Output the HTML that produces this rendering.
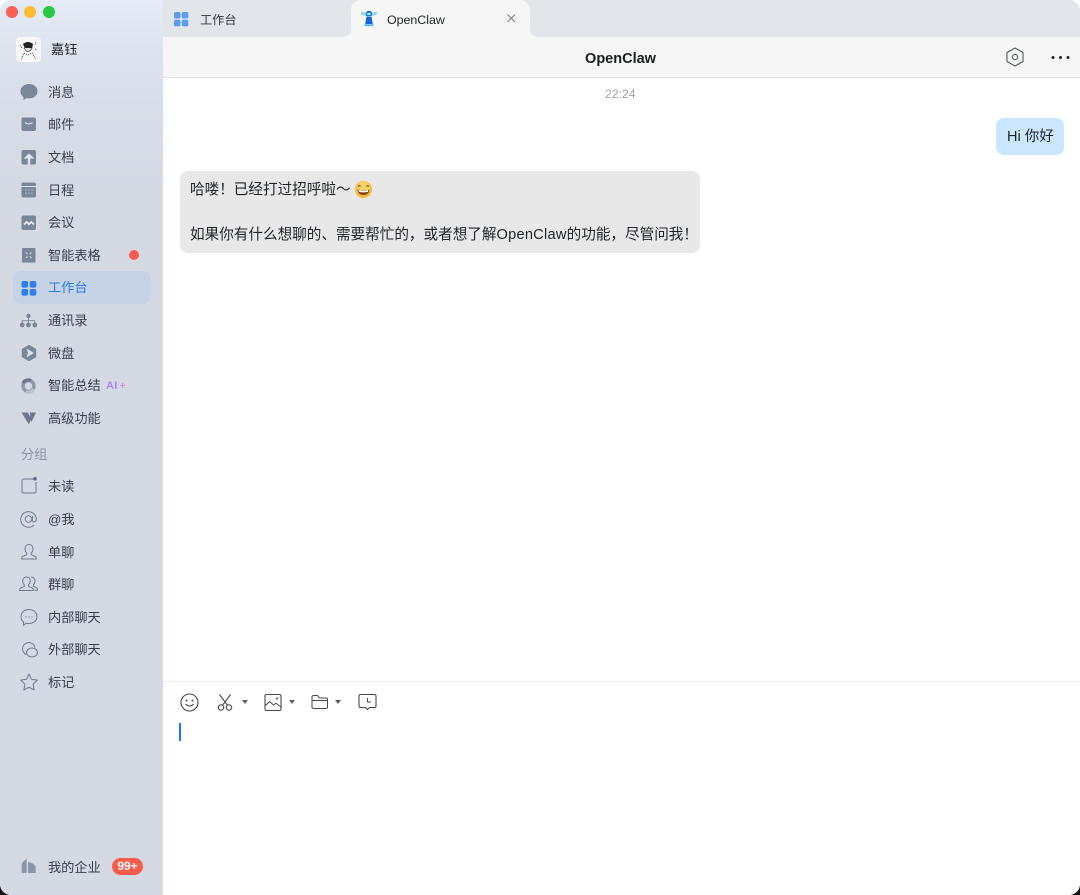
<!DOCTYPE html>
<html lang="zh">
<head>
<meta charset="utf-8">
<title>OpenClaw</title>
<style>
html,body{margin:0;padding:0;background:#fff;}
body{position:relative;width:1080px;height:895px;overflow:hidden;font-family:"Liberation Sans","Noto Sans CJK SC",sans-serif;color:#1f2329;}
#win{position:absolute;left:0;top:0;width:1080px;height:895px;overflow:hidden;border-radius:11px;background:#fff;}
#corner{position:absolute;left:0;top:860px;width:1080px;height:35px;background:#111;}
#white{position:absolute;left:0;top:0;width:1080px;height:860px;background:#f6f6f6;}
#side{position:absolute;left:0;top:0;width:163px;height:895px;background:linear-gradient(180deg,#e5ebf6 0,#d9dfea 90px,#d4d9e4 190px,#d5d9e3 100%);}
.t{position:absolute;white-space:nowrap;line-height:18px;}
.it{position:absolute;left:48px;font-size:13.2px;color:#3a404c;line-height:18px;white-space:nowrap;margin-top:.5px;}
.ic{position:absolute;left:18px;width:22px;height:22px;}
#active{position:absolute;left:13px;top:271px;width:138px;height:33px;border-radius:8px;background:#c6d3e6;}
.dot{position:absolute;width:12px;height:12px;border-radius:50%;top:6px;}
#tabs{position:absolute;left:163px;top:0;width:917px;height:37px;background:#e2e5e9;}
#tab{position:absolute;left:351px;top:0;width:179px;height:37px;background:#f6f6f6;border-radius:10px 10px 0 0;}
.fil{position:absolute;top:29px;width:8px;height:8px;background:#f6f6f6;}
.fil i{display:block;width:8px;height:8px;background:#e2e5e9;}
#head{position:absolute;left:163px;top:37px;width:917px;height:40px;background:#f6f6f6;border-bottom:1px solid #e2e2e2;box-sizing:content-box;}
#main{position:absolute;left:163px;top:78px;width:917px;height:817px;background:#fff;}
.bub{position:absolute;font-size:14.6px;line-height:22px;color:#1f2329;white-space:nowrap;}
svg{position:absolute;display:block;overflow:visible;}
</style>
</head>
<body>
<div id="corner"></div>
<div id="win">
<div id="white"></div>
<div id="side"></div>

<div class="dot" style="left:6px;background:#fe5f57"></div>
<div class="dot" style="left:24px;background:#febc2e"></div>
<div class="dot" style="left:43px;background:#28c840"></div>

<svg style="left:16px;top:37px" width="25" height="25" viewBox="0 0 25 25">
<rect width="25" height="25" rx="4" fill="#f7f7f7"/>
<path d="M7 7q5-4 10 0l-1 5-7 0z" fill="#222"/>
<path d="M8 11q4 7 8 0" fill="#ddd" stroke="#333" stroke-width=".7"/>
<path d="M5 22l3-6 4 2 4-2 4 6M4 8l2 3M20 5l-1 3M19 12l2 1" fill="none" stroke="#555" stroke-width=".8" stroke-dasharray="1.4 .8"/>
</svg>
<div class="t" style="left:51px;top:41px;font-size:13.2px;color:#1f2329">嘉钰</div>

<div id="active"></div>

<!-- 消息 -->
<svg class="ic" style="top:81px" viewBox="0 0 22 22"><path d="M11 3c4.800 0 8.500 3 8.500 7.200s-3.700 7.200-8.500 7.200c-1 0-1.800-.1-2.600-.4l-2.900 2.300v-3.500C3.700 15 2.500 12.800 2.500 10.200 2.500 6 6.200 3 11 3z" fill="#7a8799"/></svg>
<div class="it" style="top:83px">消息</div>
<!-- 邮件 -->
<svg class="ic" style="top:114px" viewBox="0 0 22 22"><rect x="3.500" y="3.500" width="14.500" height="13.500" rx="2" fill="#7a8799"/><path d="M7 8.500q3.700 2.800 7.500 0" fill="none" stroke="#dfe3eb" stroke-width="1.100"/></svg>
<div class="it" style="top:115.500px">邮件</div>
<!-- 文档 -->
<svg class="ic" style="top:146px" viewBox="0 0 22 22"><rect x="3.500" y="4" width="14.500" height="14.500" rx="2" fill="#7a8799"/><path d="M5.500 12.500l5.500-5 5.500 5z" fill="#dfe3eb"/><path d="M9.800 11h2.400v7.500H9.800z" fill="#dfe3eb"/></svg>
<div class="it" style="top:148px">文档</div>
<!-- 日程 -->
<svg class="ic" style="top:179px" viewBox="0 0 22 22"><rect x="3.500" y="3.500" width="14.500" height="15" rx="2" fill="#7a8799"/><path d="M3.500 7.500h14.500" stroke="#dfe3eb" stroke-width="1"/><path d="M7.500 11h1M10.500 11h1M13.500 11h1M7.500 14h1M10.500 14h1M13.500 14h1" stroke="#dfe3eb" stroke-width="1"/></svg>
<div class="it" style="top:181px">日程</div>
<!-- 会议 -->
<svg class="ic" style="top:212px" viewBox="0 0 22 22"><rect x="3.500" y="3.500" width="14.500" height="14.500" rx="2" fill="#7a8799"/><path d="M6 12.500l2.700-2.500 2.300 2.200 2.300-2.200 2.700 2.500" fill="none" stroke="#e6e9ef" stroke-width="1.800"/></svg>
<div class="it" style="top:213.500px">会议</div>
<!-- 智能表格 -->
<svg class="ic" style="top:244px" viewBox="0 0 22 22"><rect x="4" y="4" width="13.500" height="14.500" rx="1" fill="#7a8799"/><path d="M8 8.500l1.500 1.500M13.500 8.500l-1.500 1.500M8 14l1.500-1.500M13.500 14l-1.500-1.500" stroke="#dfe3eb" stroke-width="1"/></svg>
<div class="it" style="top:246px">智能表格</div>
<div style="position:absolute;left:129px;top:250px;width:10px;height:10px;border-radius:50%;background:#fb5b4c"></div>
<!-- 工作台 -->
<svg class="ic" style="top:278px" viewBox="0 0 22 22"><g fill="#2a7ef0"><rect x="3.500" y="3" width="6.600" height="6.600" rx="2"/><rect x="11.700" y="3" width="6.600" height="6.600" rx="2"/><rect x="3.500" y="11" width="6.600" height="6.600" rx="2"/><rect x="11.700" y="11" width="6.600" height="6.600" rx="2"/></g></svg>
<div class="it" style="top:278.500px;color:#2a7ef0">工作台</div>
<!-- 通讯录 -->
<svg class="ic" style="top:310px" viewBox="0 0 22 22"><g fill="#7a8799"><circle cx="10.500" cy="6" r="2.200"/><circle cx="4.200" cy="15" r="2.400"/><circle cx="10.500" cy="15" r="2.400"/><circle cx="16.800" cy="15" r="2.400"/></g><path d="M10.500 7v6M4.200 13v-2.300h12.600v2.300" fill="none" stroke="#7a8799" stroke-width=".9"/></svg>
<div class="it" style="top:311.500px">通讯录</div>
<!-- 微盘 -->
<svg class="ic" style="top:342px" viewBox="0 0 22 22"><path d="M11 2.800l7.200 4.100v8.200L11 19.200l-7.200-4.100V6.900z" fill="#7a8799"/><path d="M8.500 6.500l7.500 4.500-7.500 4.500 1.500-4.500z" fill="#dde1ea"/></svg>
<div class="it" style="top:344px">微盘</div>
<!-- 智能总结 -->
<svg class="ic" style="top:375px" viewBox="0 0 22 22"><circle cx="10.500" cy="11" r="5.500" fill="none" stroke="#8d98a8" stroke-width="3.400"/><path d="M5 8a6.200 6.200 0 0 1 8-2.500" fill="none" stroke="#6d7889" stroke-width="3.400"/><path d="M16 14a6.200 6.200 0 0 1-8 2.500" fill="none" stroke="#bcc3ce" stroke-width="3.400"/></svg>
<div class="it" style="top:376.500px">智能总结</div>
<div class="t" style="left:106px;top:376.500px;font-size:11px;font-weight:700;color:#a58bf0;letter-spacing:.3px">AI<span style="color:#e48ae0;font-size:10px;margin-left:2px">+</span></div>
<!-- 高级功能 -->
<svg class="ic" style="top:407px" viewBox="0 0 22 22"><path d="M3.500 5.500H10l3 6.500-2 5.500z" fill="#6b788b"/><path d="M12 5.500h6l-4.500 9.500-1.200-3.500z" fill="#6b788b"/></svg>
<div class="it" style="top:409px">高级功能</div>

<div class="it" style="left:21px;top:445px;color:#8c93a0">分组</div>

<!-- 未读 -->
<svg class="ic" style="top:475px" viewBox="0 0 22 22"><path d="M15.500 4H5.500a1.500 1.500 0 0 0-1.500 1.500v11a1.500 1.500 0 0 0 1.500 1.500h11a1.500 1.500 0 0 0 1.500-1.500V7" fill="none" stroke="#6f7c8e" stroke-width="1"/><circle cx="17" cy="3.800" r="1.800" fill="#5c6a7e"/></svg>
<div class="it" style="top:477.500px">未读</div>
<!-- @我 -->
<svg class="ic" style="top:508px" viewBox="0 0 22 22"><path d="M16 17a7.800 7.800 0 1 1 2.300-6c0 1.800-.8 3-2.100 3-1.200 0-1.700-.8-1.700-2V8" fill="none" stroke="#6f7c8e" stroke-width="1"/><circle cx="10.500" cy="11" r="3.300" fill="none" stroke="#6f7c8e" stroke-width="1"/></svg>
<div class="it" style="top:510px">@我</div>
<!-- 单聊 -->
<svg class="ic" style="top:541px" viewBox="0 0 22 22"><path d="M11 3.500c2.400 0 4 1.700 4 4.300 0 2-.8 3.400-1.800 4.300v1.600l4.300 1.800c.8.400.8 1.300.8 2.500H3.700c0-1.200 0-2.100.8-2.500l4.300-1.800v-1.600C7.800 11.200 7 9.800 7 7.800c0-2.600 1.600-4.300 4-4.300z" fill="none" stroke="#6f7c8e" stroke-width="1"/></svg>
<div class="it" style="top:543px">单聊</div>
<!-- 群聊 -->
<svg class="ic" style="top:573px" viewBox="0 0 22 22"><path d="M8.500 4c2.200 0 3.700 1.500 3.700 3.900 0 1.800-.7 3.100-1.600 3.900v1.600l3.800 1.700c.8.400.8 1.100.8 2.400H1.700c0-1.300 0-2 .8-2.400l3.800-1.700v-1.600c-.9-.8-1.600-2.100-1.600-3.900C4.700 5.500 6.300 4 8.500 4zM13 4.200c2.200-.5 4 1 4 3.600 0 1.700-.6 3-1.500 3.800v1.700l3.300 1.600c.7.400.7 1.100.7 2.400h-3" fill="none" stroke="#6f7c8e" stroke-width="1"/></svg>
<div class="it" style="top:575.500px">群聊</div>
<!-- 内部聊天 -->
<svg class="ic" style="top:606px" viewBox="0 0 22 22"><path d="M11 3.500c4.400 0 8 2.900 8 7s-3.600 7-8 7c-1 0-1.900-.1-2.800-.4l-2.700 2v-3.200C3.700 14.600 3 12.700 3 10.500c0-4.100 3.600-7 8-7z" fill="none" stroke="#6f7c8e" stroke-width="1"/><path d="M7.500 10.800h1M10.500 10.800h1M13.500 10.800h1" stroke="#6f7c8e" stroke-width="1.100"/></svg>
<div class="it" style="top:608px">内部聊天</div>
<!-- 外部聊天 -->
<svg class="ic" style="top:639px" viewBox="0 0 22 22"><path d="M8 15.500a6.300 6.300 0 1 1 9-7" fill="none" stroke="#6f7c8e" stroke-width="1"/><path d="M14 9c-3 0-5.500 2-5.500 4.500S11 18 14 18c2.900 0 5.500-2 5.500-4.500S17 9 14 9z" fill="none" stroke="#6f7c8e" stroke-width="1"/></svg>
<div class="it" style="top:640.500px">外部聊天</div>
<!-- 标记 -->
<svg class="ic" style="top:671px" viewBox="0 0 22 22"><path d="M11 3l2.500 5.300 5.800.8-4.200 4.100 1 5.800-5.100-2.800-5.100 2.800 1-5.800-4.200-4.100 5.800-.8z" fill="none" stroke="#6f7c8e" stroke-width="1" stroke-linejoin="round"/></svg>
<div class="it" style="top:673px">标记</div>

<!-- 我的企业 -->
<svg class="ic" style="top:856px" viewBox="0 0 22 22"><path d="M3.700 8.500Q4 5.500 8.700 3V17H3.700z" fill="#8a97a8"/><path d="M10 6q7.500 1 7.700 6v5H10z" fill="#8a97a8"/></svg>
<div class="it" style="top:858px">我的企业</div>
<div style="position:absolute;left:112px;top:858px;width:31px;height:17px;border-radius:9px;background:#fb5b4c;color:#fff;font-size:12px;font-weight:700;line-height:17px;text-align:center">99+</div>

<!-- tabs -->
<div id="tabs"></div>
<div class="fil" style="left:343px"><i style="border-bottom-right-radius:8px"></i></div>
<div class="fil" style="left:530px"><i style="border-bottom-left-radius:8px"></i></div>
<div id="tab"></div>
<svg style="left:172px;top:9.500px" width="18" height="18" viewBox="0 0 18 18"><g fill="#5a9cf6"><rect x="2" y="2" width="6.500" height="6.500" rx="1.800"/><rect x="9.800" y="2" width="6.500" height="6.500" rx="1.800"/><rect x="2" y="9.800" width="6.500" height="6.500" rx="1.800"/><rect x="9.800" y="9.800" width="6.500" height="6.500" rx="1.800"/></g></svg>
<div class="t" style="left:200px;top:11px;font-size:12.200px;color:#33383f">工作台</div>
<svg style="left:360px;top:9px" width="18" height="18" viewBox="0 0 18 18">
<path d="M1 2.500l5.500 1.500v3L1 5.500zM17 2.500l-5.500 1.500v3l5.500-1.500z" fill="#8fd2fa"/>
<path d="M7 2h4l1 2v3H6V4z" fill="#1677f0"/><path d="M7.300 4h3.400v2H7.300z" fill="#c5e7fc"/>
<path d="M6.500 7.500h5l1.300 7.500H5.200z" fill="#1266e0"/>
<path d="M4.500 15.200h9v2h-9z" fill="#5cb8f8"/>
</svg>
<div class="t" style="left:387px;top:10.500px;font-size:12.400px;color:#1f2329">OpenClaw</div>
<svg style="left:506px;top:13px" width="11" height="11" viewBox="0 0 11 11"><path d="M1.500 1.500l7.500 7.500M9 1.500L1.500 9" stroke="#7a7f86" stroke-width="1" fill="none"/></svg>

<!-- header -->
<div id="head"></div>
<div class="t" style="left:162px;width:917px;text-align:center;top:49.500px;font-size:14.500px;font-weight:700;color:#1a1d21">OpenClaw</div>
<svg style="left:1005px;top:47px" width="20" height="20" viewBox="0 0 20 20"><path d="M10 1l8 4.500v9L10 19l-8-4.500v-9z" fill="none" stroke="#555a61" stroke-width="1.100" stroke-linejoin="round"/><circle cx="10" cy="10" r="2.600" fill="none" stroke="#555a61" stroke-width="1.100"/></svg>
<svg style="left:1050px;top:55px" width="20" height="5" viewBox="0 0 20 5"><circle cx="3" cy="2.500" r="1.500" fill="#23262b"/><circle cx="10.500" cy="2.500" r="1.500" fill="#23262b"/><circle cx="18" cy="2.500" r="1.500" fill="#23262b"/></svg>

<!-- chat -->
<div id="main"></div>
<div class="t" style="left:605px;top:85px;font-size:12.200px;color:#a3a3a3">22:24</div>

<div style="position:absolute;left:996px;top:118px;width:68px;height:37px;background:#cbe6ff;border-radius:8px"></div>
<div class="bub" style="left:1007px;top:126px;font-size:14.500px">Hi 你好</div>

<div style="position:absolute;left:180px;top:171px;width:520px;height:82px;background:#e8e8e8;border-radius:8px"></div>
<div class="bub" style="left:190px;top:179px">哈喽！已经打过招呼啦～</div>
<svg style="left:354px;top:180px" width="19" height="19" viewBox="0 0 19 19">
<circle cx="9.500" cy="9.500" r="8.500" fill="#f5b93e"/><circle cx="9.500" cy="8" r="6.500" fill="#fbd365"/>
<path d="M4 6.500q1.200-1.500 2.500 0M12.500 6.500q1.200-1.500 2.500 0" fill="none" stroke="#5a3a12" stroke-width="1.100"/>
<path d="M3.500 9.500q6 1.200 12 0-.6 5.500-6 5.500t-6-5.500z" fill="#7a4712"/>
<path d="M4.500 10q5 .9 10 0l-.6 2q-4.400.8-8.800 0z" fill="#fff"/>
</svg>
<div class="bub" style="left:190px;top:224px">如果你有什么想聊的、需要帮忙的，或者想了解<span style="letter-spacing:.25px">OpenClaw</span>的功能，尽管问我！</div>

<!-- input -->
<div style="position:absolute;left:163px;top:681px;width:917px;height:1px;background:#ececec"></div>
<svg style="left:180px;top:693px" width="19" height="19" viewBox="0 0 19 19"><circle cx="9.500" cy="9.500" r="8.500" fill="none" stroke="#45494f" stroke-width="1.100"/><circle cx="6.500" cy="7.500" r="1" fill="#45494f"/><circle cx="12.500" cy="7.500" r="1" fill="#45494f"/><path d="M5.500 11q4 4 8 0" fill="none" stroke="#45494f" stroke-width="1.100"/></svg>
<svg style="left:217px;top:693px" width="18" height="19" viewBox="0 0 18 19"><circle cx="4" cy="14.500" r="2.700" fill="none" stroke="#45494f" stroke-width="1.100"/><circle cx="12" cy="14.500" r="2.700" fill="none" stroke="#45494f" stroke-width="1.100"/><path d="M5.500 12.300L13.500 1.500M10.500 12.300L2.500 1.500" fill="none" stroke="#45494f" stroke-width="1.100"/></svg>
<svg style="left:242px;top:700px" width="6" height="4" viewBox="0 0 6 4"><path d="M0 0h6L3 4z" fill="#5b5f65"/></svg>
<svg style="left:264px;top:693px" width="18" height="18" viewBox="0 0 18 18"><rect x="1" y="1.500" width="16" height="16" rx="1.500" fill="none" stroke="#45494f" stroke-width="1.100"/><path d="M1 13l4.500-4.500 4 3.500 2.500-1.800 5 3.800" fill="none" stroke="#45494f" stroke-width="1"/><circle cx="13" cy="5.500" r="1" fill="#45494f"/></svg>
<svg style="left:289px;top:700px" width="6" height="4" viewBox="0 0 6 4"><path d="M0 0h6L3 4z" fill="#5b5f65"/></svg>
<svg style="left:311px;top:693px" width="18" height="18" viewBox="0 0 18 18"><path d="M1 4a1.500 1.500 0 0 1 1.500-1.500h4l2 2.500h6.500a1.500 1.500 0 0 1 1.500 1.500v7.500a1.500 1.500 0 0 1-1.500 1.500h-12.500a1.500 1.500 0 0 1-1.500-1.500zM1 7.500h15.500" fill="none" stroke="#45494f" stroke-width="1.050"/></svg>
<svg style="left:335px;top:700px" width="6" height="4" viewBox="0 0 6 4"><path d="M0 0h6L3 4z" fill="#5b5f65"/></svg>
<svg style="left:358px;top:693px" width="19" height="19" viewBox="0 0 19 19"><path d="M2.500 1.500h14a1.500 1.500 0 0 1 1.500 1.500v10a1.500 1.500 0 0 1-1.500 1.500h-5l-2 2-2-2h-5a1.500 1.500 0 0 1-1.500-1.500V3a1.500 1.500 0 0 1 1.500-1.500z" fill="none" stroke="#45494f" stroke-width="1.100"/><path d="M9.500 5v4h3.500" fill="none" stroke="#45494f" stroke-width="1.100"/></svg>
<div style="position:absolute;left:179px;top:723px;width:2px;height:18px;background:#1677f0"></div>
</div>
</body>
</html>
